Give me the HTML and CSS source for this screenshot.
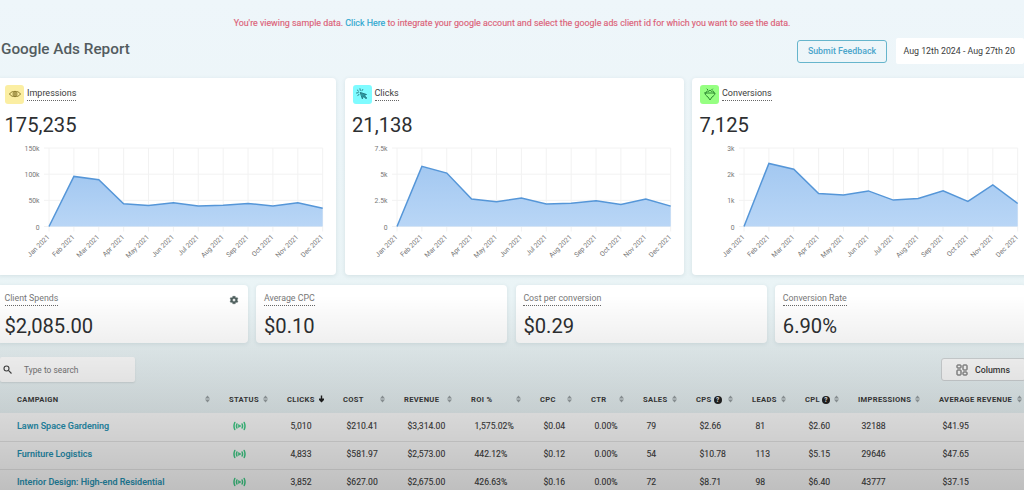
FILE: index.html
```
<!DOCTYPE html>
<html lang="en">

<head>
    <meta charset="UTF-8">
    <meta name="viewport" content="width=device-width, initial-scale=1">
    <title>Google Ads Report</title>
    <link rel="stylesheet" href="styles.css">
</head>

<body>
    <p class="notice">You're viewing sample data. <a href="#">Click Here</a> to integrate your google account and select the google ads client id for which you want to see the data.</p>

    <header class="header">
        <h1>Google Ads Report</h1>
        <button class="feedback">Submit Feedback</button>
        <div class="dates">Aug 12th 2024 - Aug 27th 20</div>
    </header>

    <section class="charts">
        <div class="card chart-card">
            <div class="card-title">
                <span class="icon icon-yellow">
                    <svg width="12" height="12" viewBox="0 0 24 24" fill="none" stroke="#8a7a2c" stroke-width="2">
                        <path d="M1 12C5 5 19 5 23 12C19 19 5 19 1 12Z" />
                        <circle cx="12" cy="12" r="4" />
                        <circle cx="12" cy="12" r="1.2" />
                    </svg>
                </span>
                <span class="label">Impressions</span>
            </div>
            <div class="number">175,235</div>
            <svg class="chart" id="impressionsChart"></svg>
        </div>
        <div class="card chart-card">
            <div class="card-title">
                <span class="icon icon-cyan">
                    <svg width="12" height="12" viewBox="0 0 24 24" fill="none" stroke="#22757e" stroke-width="1.8" stroke-linecap="round" stroke-linejoin="round">
                        <path d="M9 9L21 13L16.500 15L21.500 20L20 21.500L15 16.500L13 21Z" fill="#2a9aa2" />
                        <path d="M8 1.500L8.600 5M2.500 4L5.200 6.500M1 10L4.600 9.400M3.500 15.500L6 12.600M13.500 3L11.800 5.600" />
                    </svg>
                </span>
                <span class="label">Clicks</span>
            </div>
            <div class="number">21,138</div>
            <svg class="chart" id="clicksChart"></svg>
        </div>
        <div class="card chart-card">
            <div class="card-title">
                <span class="icon icon-green">
                    <svg width="12" height="13" viewBox="0 0 24 26" fill="none" stroke="#2f8a33" stroke-width="2" stroke-linejoin="round" stroke-linecap="round">
                        <path d="M2 10H22C22 14 19 16 16 18L12 24L8 18C5 16 2 14 2 10Z" />
                        <path d="M4 10C4 6 7 5 9 7C10 4 14 4 15 7C18 5 20 6 20 10M6 2L8 4M17 2L15 4" />
                    </svg>
                </span>
                <span class="label">Conversions</span>
            </div>
            <div class="number">7,125</div>
            <svg class="chart" id="conversionsChart"></svg>
        </div>
    </section>

    <section class="stats">
        <div class="card stat">
            <div class="stat-top">
                <span class="label">Client Spends</span>
                <svg class="gear" width="10" height="10" viewBox="0 0 24 24">
                    <path d="M19.400 13a7.500 7.500 0 0 0 0-2l2.100-1.600-2-3.500-2.500 1a7.500 7.500 0 0 0-1.700-1L15 3.200H9l-.4 2.700a7.500 7.500 0 0 0-1.700 1l-2.500-1-2 3.500L4.600 11a7.500 7.500 0 0 0 0 2l-2.200 1.600 2 3.500 2.500-1a7.500 7.500 0 0 0 1.700 1L9 21h6l.4-2.800a7.500 7.500 0 0 0 1.700-1l2.500 1 2-3.500zM12 15.600a3.600 3.600 0 1 1 0-7.200 3.600 3.600 0 0 1 0 7.200z" />
                </svg>
            </div>
            <div class="number">$2,085.00</div>
        </div>
        <div class="card stat">
            <div class="stat-top"><span class="label">Average CPC</span></div>
            <div class="number">$0.10</div>
        </div>
        <div class="card stat">
            <div class="stat-top"><span class="label">Cost per conversion</span></div>
            <div class="number">$0.29</div>
        </div>
        <div class="card stat">
            <div class="stat-top"><span class="label">Conversion Rate</span></div>
            <div class="number">6.90%</div>
        </div>
    </section>

    <section class="toolbar">
        <div class="search">
            <svg width="9" height="9" viewBox="0 0 18 18" fill="none" stroke="#444" stroke-width="2.200">
                <circle cx="7" cy="7" r="5" />
                <path d="M10.800 10.800L17 17" />
            </svg>
            <span>Type to search</span>
        </div>
        <button class="columns">
            <svg width="12" height="12" viewBox="0 0 12 12" fill="none" stroke="#555" stroke-width="1">
                <rect x="1" y="1" width="4" height="3" rx=".5" />
                <rect x="7" y="1" width="4" height="5" rx=".5" />
                <rect x="1" y="6" width="4" height="5" rx=".5" />
                <rect x="7" y="8" width="4" height="3" rx=".5" />
            </svg>
            Columns
        </button>
    </section>

    <table>
        <colgroup id="cols"></colgroup>
        <thead>
            <tr id="headRow"></tr>
        </thead>
        <tbody id="rows"></tbody>
    </table>

    <script src="script.js"></script>
</body>

</html>
```
FILE: styles.css
```
* {
    box-sizing: border-box;
}

body {
    position: relative;
    margin: 0;
    width: 1024px;
    height: 490px;
    overflow: hidden;
    font-family: Roboto, sans-serif;
    color: #3c3c3c;
    background: linear-gradient(#eef6fa, #eaf4f6 60%, #e9f3f5);
}

/* page fades to grey towards the bottom */
body::after {
    content: "";
    position: absolute;
    left: 0;
    right: 0;
    top: 295px;
    bottom: 0;
    background: linear-gradient(rgba(0, 0, 0, 0), rgba(0, 0, 0, 0.25));
    pointer-events: none;
}

.notice {
    margin: 0;
    padding-top: 17px;
    height: 38px;
    line-height: 12px;
    font-size: 8.87px;
    text-align: center;
    color: #dc6379;
    -webkit-text-stroke: 0.15px;
}

.notice a {
    color: #2ba6cf;
    text-decoration: none;
}

.header {
    display: flex;
    align-items: center;
    height: 26px;
    padding-left: 1px;
}

h1 {
    margin: 0 auto 4px 0;
    font-size: 15.3px;
    font-weight: 500;
    color: #535c5f;
}

.feedback {
    width: 90px;
    height: 23px;
    margin-right: 9px;
    padding: 0;
    border: 1px solid #66b5cc;
    border-radius: 3px;
    background: transparent;
    font: 500 8.8px Roboto, sans-serif;
    color: #4ba5cb;
}

.dates {
    width: 128px;
    height: 26px;
    padding-left: 7.5px;
    line-height: 27px;
    border-radius: 2px;
    background: #fff;
    font-size: 8.8px;
    white-space: nowrap;
}

.card {
    background: #fff;
    border-radius: 4px;
    box-shadow: 0 1px 4px rgba(40, 90, 100, 0.12);
}

.charts {
    display: grid;
    grid-template-columns: repeat(3, 339px);
    gap: 8.5px;
    margin: 14px 0 0 -3px;
}

.chart-card {
    height: 197px;
    padding-top: 6px;
}

.card-title {
    display: flex;
    align-items: center;
    gap: 3px;
    height: 20px;
    padding-left: 8px;
}

.icon {
    display: flex;
    align-items: center;
    justify-content: center;
    width: 19px;
    height: 19px;
    border-radius: 3px;
}

.icon-yellow {
    background: #fbeea2;
}

.icon-cyan {
    background: #7ffbff;
}

.icon-green {
    background: #96ff82;
}

.label {
    padding-bottom: 1px;
    line-height: 11px;
    font-size: 9px;
    border-bottom: 1px dotted #666;
}

.number {
    font-size: 20.2px;
    line-height: 24px;
    color: #2d2f31;
}

.chart-card .number {
    padding: 9px 0 0 7.5px;
}

.chart {
    display: block;
    width: 339px;
    height: 132px;
    margin-top: 3px;
}

.chart text {
    font-size: 6.8px;
    fill: #777;
    text-anchor: end;
}

.grid {
    stroke: #f2f2f2;
    stroke-width: 1;
}

.area {
    fill: url(#fade);
}

.line {
    fill: none;
    stroke: #5596d8;
    stroke-width: 1.5;
}

.stats {
    display: grid;
    grid-template-columns: repeat(4, 250.75px);
    gap: 8.7px;
    margin: 10px 0 0 -3px;
}

.stat {
    height: 58px;
    padding: 8px 9px 0 7.5px;
}

.stat-top {
    display: flex;
    justify-content: space-between;
    align-items: center;
}

.stat .label {
    color: #777;
    font-size: 8.8px;
}

.stat .number {
    margin-top: 8px;
}

.gear {
    fill: #4d5e5c;
    stroke: #4d5e5c;
}

.toolbar {
    display: flex;
    justify-content: space-between;
    margin-top: 14px;
    height: 25px;
}

.search {
    display: flex;
    align-items: center;
    gap: 12px;
    width: 135px;
    padding-left: 3px;
    border-radius: 2px;
    background: #fff;
    box-shadow: 0 1px 2px rgba(0, 0, 0, 0.1);
    font-size: 8.4px;
    color: #777;
}

.columns {
    display: flex;
    align-items: center;
    gap: 7px;
    width: 85px;
    height: 23px;
    margin: 1px -2px 0 0;
    padding: 0 0 0 14px;
    border: 1px solid #d2d6d8;
    border-radius: 3px;
    background: #fff;
    font: 500 8.8px Roboto, sans-serif;
    color: #3c3c3c;
}

table {
    width: 1031px;
    table-layout: fixed;
    border-collapse: collapse;
    font-size: 8.6px;
}

th {
    height: 31px;
    padding: 3px 9px 0 10px;
    text-align: left;
    font-size: 7.6px;
    font-weight: 700;
    letter-spacing: 0.32px;
    white-space: nowrap;
}

.th-inner {
    display: flex;
    align-items: center;
    justify-content: space-between;
}

.sort {
    fill: #9aa2a5;
}

.sort .on {
    fill: #222;
}

.help {
    display: inline-block;
    width: 8px;
    height: 8px;
    margin-left: 2px;
    border-radius: 50%;
    background: #222;
    color: #fff;
    font-size: 6.5px;
    line-height: 8px;
    letter-spacing: 0;
    text-align: center;
}

td {
    height: 28px;
    padding: 0 0 2px 13.5px;
    background: #fff;
    border-bottom: 1px solid #e8e8e8;
    -webkit-text-stroke: 0.1px;
}

th:first-child,
td:first-child {
    padding-left: 17px;
}

td:first-child {
    font-size: 9px;
    font-weight: 500;
    color: #2795b6;
}

td svg {
    display: block;
}
```
FILE: script.js
```
const months = ['Jan', 'Feb', 'Mar', 'Apr', 'May', 'Jun', 'Jul', 'Aug', 'Sep', 'Oct', 'Nov', 'Dec'];

// plot area inside the chart svg
const left = 52;
const right = 325.7;
const top_ = 8;
const bottom = 86.5;

function drawChart(id, max, ticks, values) {
    const x = i => left + i * (right - left) / 11;
    const y = v => bottom - v / max * (bottom - top_);
    let svg = '<defs><linearGradient id="fade" x1="0" y1="0" x2="0" y2="1">' +
        '<stop offset="0" stop-color="#a3c8f1"/><stop offset="1" stop-color="#b9d6f6"/></linearGradient></defs>';

    ticks.forEach((tick, i) => {
        const ty = bottom - i * (bottom - top_) / 3;
        svg += `<line class="grid" x1="${left - 5}" x2="${right}" y1="${ty}" y2="${ty}"/>`;
        svg += `<text x="${left - 9.5}" y="${ty + 3}">${tick}</text>`;
    });
    months.forEach((month, i) => {
        svg += `<line class="grid" x1="${x(i)}" x2="${x(i)}" y1="${top_}" y2="${bottom + 5}"/>`;
        svg += `<text transform="translate(${x(i) + 1} ${bottom + 11}) rotate(-45)">${month} 2021</text>`;
    });

    const points = values.map((v, i) => `${x(i).toFixed(1)},${y(v).toFixed(1)}`).join(' ');
    svg += `<polygon class="area" points="${points} ${right},${bottom}"/>`;
    svg += `<polyline class="line" points="${points}"/>`;
    document.getElementById(id).innerHTML = svg;
}

drawChart('impressionsChart', 150, ['0', '50k', '100k', '150k'], [0, 95.8, 89.5, 43.5, 40, 45.5, 39, 40.5, 44, 39, 45.5, 34.7]);
drawChart('clicksChart', 7.5, ['0', '2.5k', '5k', '7.5k'], [0, 5.74, 5.1, 2.62, 2.36, 2.71, 2.14, 2.22, 2.46, 2.11, 2.62, 1.95]);
drawChart('conversionsChart', 3, ['0', '1k', '2k', '3k'], [0, 2.41, 2.19, 1.26, 1.2, 1.36, 1.01, 1.07, 1.37, 0.96, 1.59, 0.88]);

const columns = [
    ['CAMPAIGN', 219], ['STATUS', 58], ['CLICKS', 56], ['COST', 61], ['REVENUE', 67],
    ['ROI %', 69], ['CPC', 51], ['CTR', 52], ['SALES', 53], ['CPS', 56],
    ['LEADS', 53], ['CPL', 53], ['IMPRESSIONS', 81], ['AVERAGE REVENUE', 102]
];

const campaigns = [
    ['Lawn Space Gardening', 'live', '5,010', '$210.41', '$3,314.00', '1,575.02%', '$0.04', '0.00%', '79', '$2.66', '81', '$2.60', '32188', '$41.95'],
    ['Furniture Logistics', 'live', '4,833', '$581.97', '$2,573.00', '442.12%', '$0.12', '0.00%', '54', '$10.78', '113', '$5.15', '29646', '$47.65'],
    ['Interior Design: High-end Residential', 'live', '3,852', '$627.00', '$2,675.00', '426.63%', '$0.16', '0.00%', '72', '$8.71', '98', '$6.40', '43777', '$37.15']
];

const sortIcon = '<svg class="sort" width="5" height="8" viewBox="0 0 5 8"><path d="M0 3.5L2.500 .5L5 3.500ZM0 4.500L2.500 7.500L5 4.500Z"/></svg>';
const sortedIcon = '<svg class="sort" width="5" height="8" viewBox="0 0 5 8"><path class="on" d="M1.800 .5H3.200V3.500H5V5L2.500 7.500L0 5V3.500H1.800Z"/></svg>';
const liveIcon = '<svg width="13" height="10" viewBox="0 0 13 10" fill="none" stroke="#3fce88" stroke-width="1.5" stroke-linecap="round">' +
    '<path d="M1.800 1.500Q.2 5 1.800 8.500M11.200 1.500Q12.800 5 11.200 8.500M3.900 3Q3 5 3.900 7M9.100 3Q10 5 9.100 7"/><path d="M5.700 3.800L7.800 5L5.700 6.200Z" fill="#3fce88" stroke-width=".8"/></svg>';

document.getElementById('cols').innerHTML = columns.map(c => `<col style="width: ${c[1]}px">`).join('');

document.getElementById('headRow').innerHTML = columns.map(([name]) => {
    const help = name === 'CPS' || name === 'CPL' ? '<span class="help">?</span>' : '';
    const icon = name === 'CLICKS' ? sortedIcon : sortIcon;
    return `<th><div class="th-inner"><span>${name}${help}</span>${icon}</div></th>`;
}).join('');

document.getElementById('rows').innerHTML = campaigns.map(row =>
    '<tr>' + row.map(cell => `<td>${cell === 'live' ? liveIcon : cell}</td>`).join('') + '</tr>'
).join('');
```
